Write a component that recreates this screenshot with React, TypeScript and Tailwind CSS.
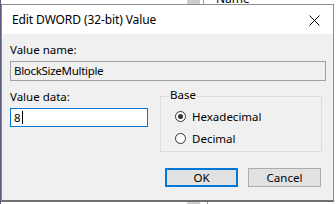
import React from "react";

const font = { fontFamily: '"Noto Sans", "Open Sans", sans-serif' };

export default function App() {
  return (
    <div className="relative w-[336px] h-[204px] overflow-hidden bg-white" style={font}>
      {/* background app remnants */}
      <div className="absolute left-[187px] top-0 w-[13px] h-[4px] bg-[#cdcdcd]" />
      <div className="absolute left-[203px] top-0 w-px h-[4px] bg-[#9a9a9a]" />
      <div className="absolute left-[216px] top-[-7px] text-[12px] leading-[12px] text-black">Name</div>
      <div className="absolute left-[187px] top-[201px] w-[13px] h-[3px] bg-[#cdcdcd]" />
      <div className="absolute left-[207px] top-[201px] w-px h-[3px] bg-[#9a9a9a]" />
      <div className="absolute left-0 top-0 w-[1px] h-[204px] bg-[#5a5a7a]" />
      <div className="absolute left-[331px] top-[50px] w-[2px] h-[8px] bg-[#333]" />

      {/* dialog window */}
      <div className="absolute left-[1px] top-[4px] w-[333px] h-[198px] border border-[#8c8c8c] border-b-[#6f6f6f] border-b-2 bg-[#f0f0f0] flex flex-col">
        <div className="h-[29px] bg-white flex items-center justify-between pl-[10px] pr-[13px] shrink-0">
          <span className="text-[12px] text-black tracking-[-0.1px]">Edit DWORD (32-bit) Value</span>
          <svg width="11" height="11" viewBox="0 0 11 11" className="mt-[2px]">
            <path d="M0.5 0.5 L10.5 10.5 M10.5 0.5 L0.5 10.5" stroke="#000" strokeWidth="1" fill="none" />
          </svg>
        </div>
        <div className="flex flex-col px-[8px] pt-[9px] text-[11.5px] text-black">
          <div className="leading-[14px] h-[14px]">Value name:</div>
          <div className="mt-[4px] h-[20px] w-[316px] border border-[#a0a0a0] bg-[#f0f0f0] flex items-center pl-[3px] tracking-[-0.3px]">
            BlockSizeMultiple
          </div>
          <div className="flex mt-[9px]">
            <div className="flex flex-col w-[138px]">
              <div className="leading-[14px] h-[14px]">Value data:</div>
              <div className="mt-[4px] h-[19px] w-[138px] border border-[#0078d7] bg-white flex items-center pl-[3px]">
                <span>8</span>
                <span className="w-px h-[13px] bg-black ml-[1px]" />
              </div>
            </div>
            <div className="relative ml-[12px] mt-[6px] w-[162px] h-[56px] border border-[#dcdcdc]">
              <span className="absolute left-[8px] top-[-9px] bg-[#f0f0f0] px-[1px] leading-[14px]">Base</span>
              <div className="flex flex-col pl-[14px] pt-[13px] gap-[9px]">
                <div className="flex items-center gap-[6px] h-[13px]">
                  <span className="w-[11px] h-[11px] rounded-full border border-[#333] bg-white flex items-center justify-center">
                    <span className="w-[5px] h-[5px] rounded-full bg-[#333]" />
                  </span>
                  <span className="leading-[14px]">Hexadecimal</span>
                </div>
                <div className="flex items-center gap-[6px] h-[13px]">
                  <span className="w-[11px] h-[11px] rounded-full border border-[#333] bg-white" />
                  <span className="leading-[14px]">Decimal</span>
                </div>
              </div>
            </div>
          </div>
          <div className="flex justify-end gap-[10px] mt-[16px] pr-[4px]">
            <div className="w-[73px] h-[19px] border-2 border-[#0078d7] bg-[#e1e1e1] flex items-center justify-center">OK</div>
            <div className="w-[73px] h-[19px] border border-[#adadad] bg-[#e1e1e1] flex items-center justify-center">Cancel</div>
          </div>
        </div>
      </div>
    </div>
  );
}
